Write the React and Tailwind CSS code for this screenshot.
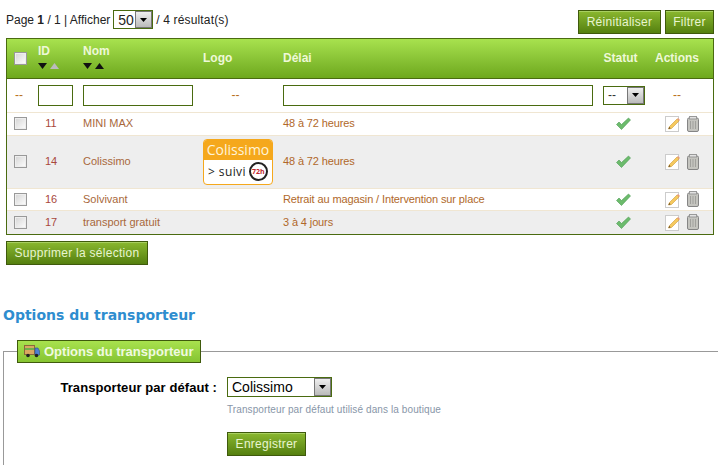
const btn =
  "h-6 border border-[#3f5a0c] bg-gradient-to-b from-[#8ab82f] to-[#55800f] text-xs tracking-[0.28px] text-[#e8f5d0] shadow-[inset_0_1px_0_#a8cf60]";

const rows = [
  { id: 11, name: "MINI MAX", delay: "48 à 72 heures", h: "h-[23px]", alt: false },
  { id: 14, name: "Colissimo", delay: "48 à 72 heures", h: "h-[53px]", alt: true, logo: true },
  { id: 16, name: "Solvivant", delay: "Retrait au magasin / Intervention sur place", h: "h-[22px]", alt: false },
  { id: 17, name: "transport gratuit", delay: "3 à 4 jours", h: "h-6", alt: true },
];

const Checkbox = () => (
  <span className="block size-[13px] border border-[#999] bg-gradient-to-br from-[#d4d4d4] to-white shadow-[inset_0_0_0_1px_#eee]" />
);

const Arrow = ({ up, color }) => (
  <svg width="9" height="6" viewBox="0 0 10 6" preserveAspectRatio="none" className="block">
    <path d={up ? "M0 6 5 0l5 6Z" : "M0 0h10L5 6Z"} fill={color} />
  </svg>
);

const SelectArrow = () => (
  <span className="flex h-full w-[17px] items-center justify-center border border-[#777] bg-gradient-to-b from-[#eee] to-[#bbb]">
    <svg width="7" height="4" viewBox="0 0 7 4">
      <path d="M0 0h7L3.5 4Z" fill="#000" />
    </svg>
  </span>
);

const Select = ({ value, className, text }) => (
  <div className={`flex items-center justify-between border border-[#4a6b10] bg-white ${className}`}>
    <span className={text}>{value}</span>
    <SelectArrow />
  </div>
);

const Check = () => (
  <svg width="17" height="13" viewBox="0 0 16 13" className="mx-auto block">
    <path d="M1 7.500 3.500 5 6 7.500 13 1l2 2-9 9.500Z" fill="#6cbb6c" stroke="#4a9a52" strokeWidth="0.6" />
  </svg>
);

const Pencil = () => (
  <svg width="16" height="17" viewBox="0 0 16 17">
    <rect x="0.500" y="1.500" width="13" height="15" fill="#fff" stroke="#ccc" />
    <path d="M3.500 14 4.500 11.500 12 4l2 2-7.500 7.500Z" fill="#f5c95e" stroke="#d09a36" strokeWidth="0.6" />
    <path d="M3.500 14 4.200 12l1.500 1.300Z" fill="#5a4320" />
    <path d="m12 4 1-1 2 2-1 1Z" fill="#e89a7a" />
  </svg>
);

const Trash = () => (
  <svg width="12" height="16" viewBox="0 0 12 16">
    <rect x="0.500" y="2" width="11" height="13.500" rx="1.500" fill="#c4c4bf" stroke="#858585" />
    <rect x="2.500" y="0.500" width="7" height="2.500" fill="#e2e2e2" stroke="#999" />
    <path d="M3.500 5v8M6 5v8M8.500 5v8" stroke="#a0a09c" />
  </svg>
);

const Truck = () => (
  <svg width="16" height="13" viewBox="0 0 16 13">
    <rect x="0.500" y="0.500" width="10" height="9" fill="#d9a860" stroke="#8a6a3a" />
    <rect x="1" y="3" width="9" height="2" fill="#6fb04a" />
    <path d="M11 3h3l1.500 3v4H11Z" fill="#4f7fd0" stroke="#2f4f90" strokeWidth="0.6" />
    <circle cx="4" cy="10.500" r="1.800" fill="#222" />
    <circle cx="12.500" cy="10.500" r="1.800" fill="#222" />
  </svg>
);

const Logo = () => (
  <div className="flex h-[46px] w-[70px] flex-col overflow-hidden rounded-[4px] border border-[#f5a81c] bg-white font-['Open_Sans',sans-serif]">
    <div className="flex h-[20px] shrink-0 items-center justify-center bg-[#f5a81c] text-sm text-[#fff4d8]">Colissimo</div>
    <div className="flex flex-1 items-center gap-[3px] pl-1 text-[#222]">
      <span className="text-xs leading-none tracking-[0.4px]">&gt; suivi</span>
      <span className="flex size-[19px] items-center justify-center rounded-full border-2 border-[#222] text-[7px] font-bold text-[#c0272d]">72h</span>
    </div>
  </div>
);

export default function App() {
  return (
    <div className="h-[465px] w-[718px] overflow-hidden bg-white font-['Liberation_Sans',Arial,sans-serif] text-xs text-[#222]">
      {/* Barre de pagination */}
      <div className="flex h-[38px] items-start justify-between pl-[6px] pr-1 pt-[10px]">
        <div className="flex h-[19px] items-center gap-[3px]">
          <span>Page <b>1</b> / 1 | Afficher</span>
          <Select value="50" className="h-[19px] w-10 pl-1" text="text-sm" />
          <span className="tracking-[0.15px]">/ 4 résultat(s)</span>
        </div>
        <div className="flex gap-1">
          <button className={`${btn} w-[83px]`}>Réinitialiser</button>
          <button className={`${btn} w-[49px]`}>Filtrer</button>
        </div>
      </div>

      {/* Tableau */}
      <div className="mx-[6px] w-[708px] border border-[#4a6b10]">
        <table className="w-full table-fixed border-collapse">
          <colgroup>
            <col className="w-[26px]" />
            <col className="w-[45px]" />
            <col className="w-[120px]" />
            <col className="w-[80px]" />
            <col className="w-[320px]" />
            <col className="w-[50px]" />
            <col />
          </colgroup>
          <thead>
            <tr className="h-[39px] bg-gradient-to-b from-[#a8e24e] to-[#6ea81c] text-left font-bold text-[#eef8d8]">
              <th className="pl-[7px]"><Checkbox /></th>
              <th className="pl-[5px] align-top pt-[5px] font-bold">
                <div className="leading-[14px]">ID</div>
                <div className="mt-[5px] flex gap-[3px]"><Arrow color="#111" /><Arrow up color="#bbb" /></div>
              </th>
              <th className="pl-[5px] align-top pt-[5px] font-bold">
                <div className="leading-[14px]">Nom</div>
                <div className="mt-[5px] flex gap-[3px]"><Arrow color="#111" /><Arrow up color="#111" /></div>
              </th>
              <th className="pl-[5px] font-bold">Logo</th>
              <th className="pl-[5px] font-bold">Délai</th>
              <th className="pr-[5px] text-center font-bold">Statut</th>
              <th className="pr-[7px] text-center font-bold">Actions</th>
            </tr>
          </thead>
          <tbody>
            <tr className="h-[34px] border-b border-t border-b-[#f0e6d2] border-t-[#4a6b10]">
              <td className="pl-2 text-[#b8701a]">--</td>
              <td className="pl-[5px]"><div className="h-[21px] w-[35px] border border-[#4a6b10]" /></td>
              <td className="pl-[5px]"><div className="h-[21px] w-[110px] border border-[#4a6b10]" /></td>
              <td className="pr-[5px] text-center text-[#b8701a]">--</td>
              <td className="pl-[5px]"><div className="h-[21px] w-[310px] border border-[#4a6b10]" /></td>
              <td className="pl-[5px]"><Select value="--" className="h-[19px] w-[42px] pl-1" text="text-[#333]" /></td>
              <td className="pr-[7px] text-center text-[#b8701a]">--</td>
            </tr>
            {rows.map((row) => (
              <tr key={row.id} className={`${row.h} border-b border-[#f0e6d2] text-[11px] last:border-b-0 ${row.alt ? "bg-[#eeeeee]" : "bg-white"}`}>
                <td className="pl-[7px]"><Checkbox /></td>
                <td className="pr-[9px] text-center text-[#a8483c]">{row.id}</td>
                <td className="pl-[5px] text-[#a8683c]">{row.name}</td>
                <td className="pl-[5px]">{row.logo && <Logo />}</td>
                <td className="pl-[5px] tracking-[-0.12px] text-[#b0682a]">{row.delay}</td>
                <td><Check /></td>
                <td>
                  <div className="flex items-center gap-[6px] pl-[17px]"><Pencil /><Trash /></div>
                </td>
              </tr>
            ))}
          </tbody>
        </table>
      </div>

      <div className="ml-[6px] mt-[6px]">
        <button className={`${btn} w-[142px]`}>Supprimer la sélection</button>
      </div>

      <h2 className="ml-[3px] mt-[40px] font-['DejaVu_Sans',sans-serif] text-[14px] font-bold leading-5 text-[#2e8dcf]">Options du transporteur</h2>

      {/* Options */}
      <fieldset className="ml-[3px] mt-[15px] h-[200px] w-[760px] border border-[#999] pl-[13px]">
        <legend className="flex h-[23px] w-[184px] items-center gap-1 whitespace-nowrap border border-[#3f5a0c] bg-gradient-to-b from-[#a8e24e] to-[#86c431] pl-[6px] text-[13px] font-bold text-[#f0fae0]">
          <Truck />
          Options du transporteur
        </legend>
        <div className="-ml-[13px] mt-[14px] flex">
          <label className="w-[223px] shrink-0 pr-[10px] pt-[2px] text-right text-[13px] font-bold tracking-[0.08px] text-black">Transporteur par défaut :</label>
          <div>
            <Select value="Colissimo" className="h-5 w-[105px] pl-1" text="text-sm text-black" />
            <p className="mt-[6px] text-[10px] leading-[13px] tracking-[0.1px] text-[#8896a8]">Transporteur par défaut utilisé dans la boutique</p>
            <button className={`${btn} mt-4 w-[79px]`}>Enregistrer</button>
          </div>
        </div>
      </fieldset>
    </div>
  );
}
